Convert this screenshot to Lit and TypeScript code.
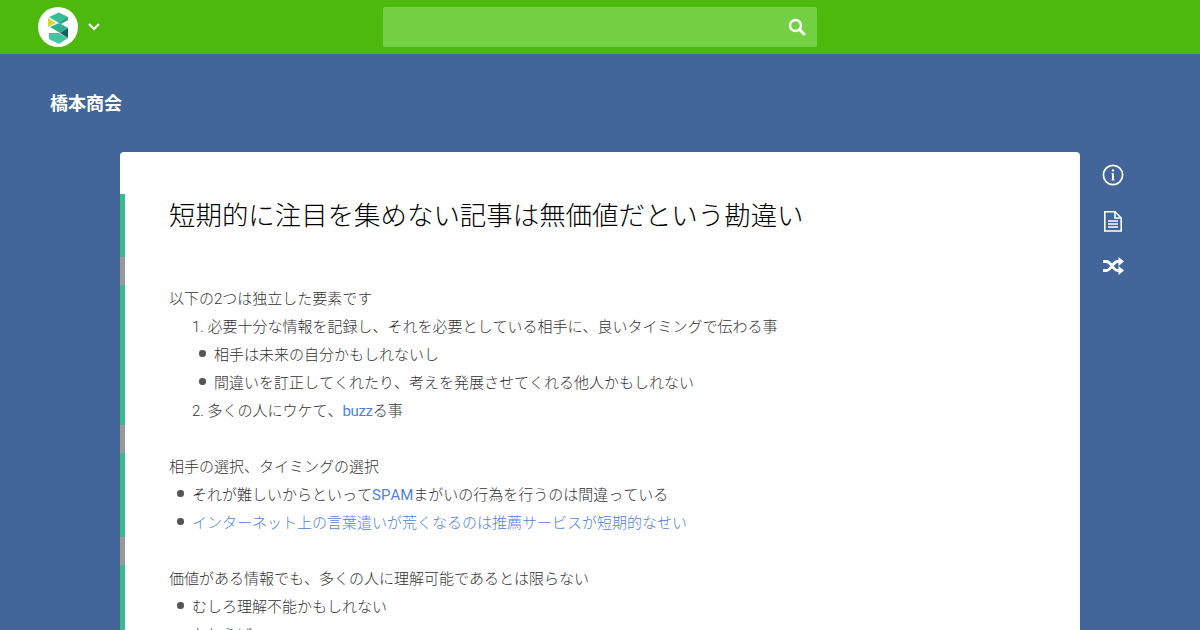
import { LitElement, html, css, svg } from "lit";
import { customElement } from "lit/decorators.js";

const logo = svg`<svg class="logo" viewBox="0 0 40 40" width="40" height="40">
<circle cx="20" cy="20" r="20" fill="#fff"/>
<path d="M21 5.5 L30 10 V13 L21 16 L11 10Z" fill="#37bd98"/>
<path d="M21 16 L30 10 V13 L23 17Z" fill="#2a9d84"/>
<path d="M10 11 L18 16 L10 20Z" fill="#cfdc2e"/>
<path d="M12 20 L21 16 L30 21 L22 26Z" fill="#2fae90"/>
<path d="M30 21 V31 L22 26Z" fill="#11605f"/>
<path d="M11 26 H21 L30 31 L21 37 L11 32Z" fill="#45c4a2"/>
</svg>`;

@customElement("app-root")
export class AppRoot extends LitElement {
  static styles = css`
    :host {
      display: block;
      height: 630px;
      overflow: hidden;
      background: #426699;
      font-family: Roboto, "Noto Sans CJK JP", sans-serif;
      font-size: 15px;
      font-weight: 300;
      font-kerning: none;
      color: #333;
    }
    header {
      height: 54px;
      background: #4cb90c;
      display: grid;
      grid-template-columns: 1fr 434px 1fr;
      align-items: center;
    }
    .brand {
      display: flex;
      align-items: center;
      gap: 9px;
      padding-left: 38px;
    }
    .logo { display: block; }
    .search {
      height: 40px;
      background: #72d042;
      border-radius: 2px;
      display: flex;
      align-items: center;
      justify-content: flex-end;
      padding-right: 11px;
    }
    .title {
      font-size: 18px;
      font-weight: 700;
      color: #fff;
      line-height: 28px;
      padding: 36px 0 34px 50px;
    }
    main {
      display: grid;
      grid-template-columns: 960px 1fr;
      padding-left: 120px;
    }
    .card {
      background: #fff;
      border-radius: 4px 4px 0 0;
      padding-top: 42px;
    }
    .row {
      border-left: 5px solid #3cb88f;
      padding-left: 44px;
      height: 28px;
      line-height: 29px;
      white-space: nowrap;
    }
    .row.gap { border-left-color: #999; }
    h1 {
      margin: 0;
      border-left: 5px solid #3cb88f;
      padding-left: 44px;
      height: 63px;
      font-size: 26.45px;
      font-weight: 300;
      line-height: 44px;
      color: #000;
    }
    .num { padding-left: 67px; }
    .item::before {
      content: "";
      display: inline-block;
      width: 6.5px;
      height: 6.5px;
      border-radius: 50%;
      background: #555;
      margin: 0 8.5px 0 -15px;
      vertical-align: 3.5px;
    }
    .l1 { margin-left: 23px; }
    .l2 { margin-left: 45px; }
    a { color: #4f82dc; text-decoration: none; }
    .latin { font-weight: 400; }
    .tight { letter-spacing: -0.38px; }
    .side {
      display: flex;
      flex-direction: column;
      align-items: flex-start;
      gap: 21.5px;
      padding: 11px 0 0 22px;
    }
    .side svg { display: block; }
  `;

  render() {
    return html`
      <header>
        <div class="brand">
          ${logo}
          <svg width="14" height="14" viewBox="0 0 14 14"><path d="M2 4 L7 9 L12 4" fill="none" stroke="#fff" stroke-width="2.2"/></svg>
        </div>
        <div class="search">
          <svg width="18" height="18" viewBox="0 0 18 18" fill="none" stroke="#fff"><circle cx="7.5" cy="7.5" r="5.5" stroke-width="2.4"/><path d="M11.5 11.5 L16 16" stroke-width="3" stroke-linecap="round"/></svg>
        </div>
        <div></div>
      </header>
      <div class="title">橋本商会</div>
      <main>
        <article class="card">
          <h1>短期的に注目を集めない記事は無価値だという勘違い</h1>
          <div class="row gap"></div>
          <div class="row">以下の2つは独立した要素です</div>
          <div class="row num">1. 必要十分な情報を記録し、それを必要としている相手に、良いタイミングで伝わる事</div>
          <div class="row"><div class="item l2">相手は未来の自分かもしれないし</div></div>
          <div class="row"><div class="item l2">間違いを訂正してくれたり、考えを発展させてくれる他人かもしれない</div></div>
          <div class="row num">2. 多くの人にウケて、<a class="latin tight">buzz</a>る事</div>
          <div class="row gap"></div>
          <div class="row">相手の選択、タイミングの選択</div>
          <div class="row"><div class="item l1">それが難しいからといって<a class="latin">SPAM</a>まがいの行為を行うのは間違っている</div></div>
          <div class="row"><div class="item l1"><a>インターネット上の言葉遣いが荒くなるのは推薦サービスが短期的なせい</a></div></div>
          <div class="row gap"></div>
          <div class="row">価値がある情報でも、多くの人に理解可能であるとは限らない</div>
          <div class="row"><div class="item l1">むしろ理解不能かもしれない</div></div>
          <div class="row"><div class="item l1">たとえば</div></div>
        </article>
        <aside class="side">
          <svg width="22" height="24" viewBox="0 0 22 24" fill="none" stroke="#fff"><circle cx="11" cy="12" r="9.6" stroke-width="1.7"/><path d="M11 10.5 V17" stroke-width="2"/><path d="M9.5 17 H12.5 M9.5 10.5 H11" stroke-width="1.2"/><circle cx="11" cy="7.4" r="1.2" fill="#fff" stroke="none"/></svg>
          <svg width="22" height="24" viewBox="0 0 22 24" fill="none" stroke="#fff" stroke-width="1.6"><path d="M2.8 2.8 H13 L19.2 9 V22 H2.8Z"/><path d="M13 2.8 V9 H19.2"/><path d="M6 12 H16 M6 15 H16 M6 18 H16" stroke-width="1.4"/></svg>
          <svg width="22" height="24" viewBox="0 0 22 24" fill="none" stroke="#fff"><path d="M1 7.5 H4.5 C9 7.5 11 16.5 15.5 16.5 H18 M1 16.5 H4.5 C9 16.5 11 7.5 15.5 7.5 H18" stroke-width="2.8"/><path d="M16.5 3 L22 7.5 L16.5 12Z M16.5 12 L22 16.5 L16.5 21Z" fill="#fff" stroke="none"/></svg>
        </aside>
      </main>
    `;
  }
}
